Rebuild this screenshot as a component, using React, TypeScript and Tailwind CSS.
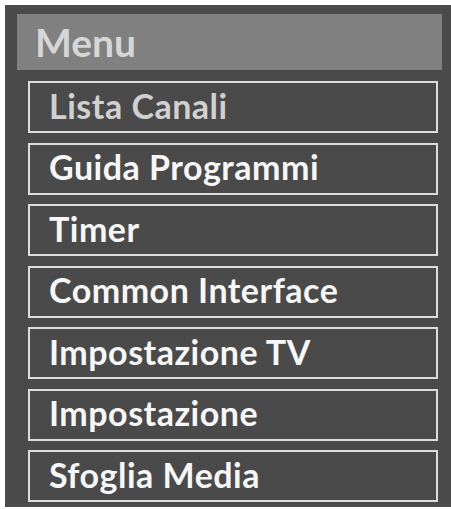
const items = [
  'Lista Canali',
  'Guida Programmi',
  'Timer',
  'Common Interface',
  'Impostazione TV',
  'Impostazione',
  'Sfoglia Media',
];

export default function App() {
  return (
    <div className="w-[451px] h-[509px] bg-white pt-[5px] pl-[5px] pb-[2px]">
      <div
        className="h-full bg-[#4a4a4a] pt-[9px] pl-[12px] pr-[9px]"
        style={{ fontFamily: 'Lato, "Open Sans", sans-serif' }}
      >
        <div className="h-[56px] bg-[#808080] flex items-center pl-[18px]">
          <span className="text-[39px] font-bold text-[#d6d6d6] leading-none">Menu</span>
        </div>
        <div className="flex flex-col gap-[9.5px] mt-[11px] pl-[11px] pr-[4px]">
          {items.map((label, i) => (
            <div
              key={label}
              className="h-[52px] border-2 border-[#dcdcdc] flex items-center pl-[19px]"
            >
              <span
                className={
                  'text-[34px] font-bold leading-none tracking-[0.5px] -mt-[3px] ' +
                  (i === 0 ? 'text-[#d0d0d0]' : 'text-[#f7f7f7]')
                }
              >
                {label}
              </span>
            </div>
          ))}
        </div>
      </div>
    </div>
  );
}
